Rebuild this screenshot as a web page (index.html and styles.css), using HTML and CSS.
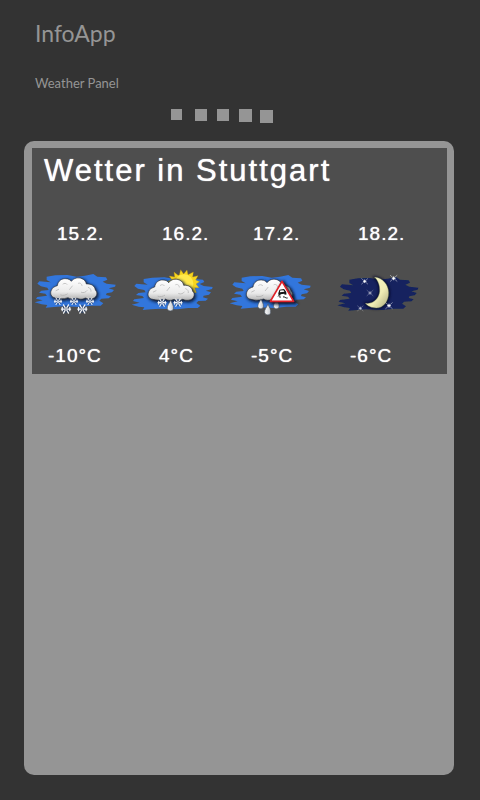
FILE: index.html
```
<!DOCTYPE html>
<html lang="de">
<head>
<meta charset="utf-8">
<meta name="viewport" content="width=device-width, initial-scale=1">
<title>InfoApp</title>
<link rel="stylesheet" href="styles.css">
</head>
<body>
<svg class="defs" aria-hidden="true">
  <defs>
    <filter id="soft" x="-10%" y="-10%" width="120%" height="120%"><feGaussianBlur stdDeviation="1.8"/></filter>
    <filter id="shade" x="-20%" y="-20%" width="140%" height="140%"><feGaussianBlur stdDeviation="4"/></filter>
    <linearGradient id="cloudFill" x1="0" y1="0" x2="0" y2="1">
      <stop offset="0" stop-color="#ffffff"/><stop offset=".65" stop-color="#ebebeb"/><stop offset="1" stop-color="#b4b4b4"/>
    </linearGradient>
    <linearGradient id="dropFill" x1="0" y1="0" x2="1" y2="0">
      <stop offset="0" stop-color="#ffffff"/><stop offset="1" stop-color="#c4c8cd"/>
    </linearGradient>
    <linearGradient id="moonFill" x1="0" y1="0" x2="1" y2="1">
      <stop offset="0" stop-color="#fbf9c8"/><stop offset=".6" stop-color="#eeecb4"/><stop offset="1" stop-color="#a9a87c"/>
    </linearGradient>
    <path id="splash" d="M50 44 L76 40 L112 39 L140 44 L165 41 L190 36 L202 44 L228 46 L232 53 L218 59 L230 65 L257 68 L255 74 L236 79 L252 84 L246 91 L230 94 L228 99 L243 103 L236 109 L214 110 L208 116 L220 124 L212 131 L184 131 L150 135 L100 133 L72 135 L47 137 L52 129 L35 127 L14 121 L38 115 L18 110 L22 105 L51 101 L46 95 L27 92 L34 86 L56 84 L52 77 L33 73 L22 65 L28 58 L62 61 L50 54 Z"/>
    <path id="cloudShape" d="M76 108 C64 106 59 95 64 85 C66 76 76 73 82 71 C84 56 96 49 107 50 C116 50 121 54 124 58 C131 48 145 45 156 50 C164 53 168 60 169 66 C184 64 195 73 196 84 C204 91 201 105 190 109 C179 113 171 110 166 108 C154 114 146 111 140 108 C130 113 120 111 114 107 C101 112 86 111 76 108 Z"/>
    <g id="cloud">
      <use href="#cloudShape" x="3" y="4" fill="#101d38" stroke="#101d38" stroke-width="5" filter="url(#shade)"/>
      <use href="#cloudShape" fill="url(#cloudFill)" stroke="#30343b" stroke-width="2"/>
      <g fill="none" stroke="#a4a4a4" stroke-width="3" stroke-linecap="round" opacity=".6" filter="url(#soft)">
        <path d="M99 66 C102 63 109 63 111 67M145 64 C150 61 156 66 156 71M78 86 L86 82M127 72 L119 82M175 76 C181 78 184 83 183 88M154 91 C161 94 168 90 171 86M92 99 C99 102 108 99 112 96"/>
      </g>
    </g>
    <g id="flake" fill="none" stroke-linecap="round">
      <circle r="10" fill="#26426f" stroke="none" opacity=".55"/>
      <g stroke="#f4f6f9" stroke-width="3"><path d="M-11 0H-3M3 0H11M-6 -10L-2 -3M2 3L6 10M6 -10L2 -3M-2 3L-6 10M-9 -4V4M9 -4V4"/></g>
      <circle r="2" fill="#f4f6f9" stroke="none"/>
    </g>
    <path id="drop" d="M1 -17 C4 -8 11 0 9 9 C7 18 -6 18 -9 9 C-11 1 -3 -7 1 -17 Z" fill="url(#dropFill)" stroke="#47505e" stroke-width="2"/>
    <g id="star" stroke="#ffffff" stroke-linecap="round">
      <path d="M-9 -8L9 8M9 -8L-9 8" stroke-width="1.6" opacity=".75"/>
      <path d="M-4 0H4M0 -4V4" stroke-width="2.6"/>
      <circle r="2.2" fill="#ffffff" stroke="none"/>
    </g>
  </defs>
</svg>

<header class="app-header">
  <h1 class="app-title">InfoApp</h1>
  <p class="app-subtitle">Weather Panel</p>
</header>

<div class="pager" aria-hidden="true">
  <span class="dot dot-small"></span>
  <span class="dot dot-medium"></span>
  <span class="dot dot-medium"></span>
  <span class="dot dot-large"></span>
  <span class="dot dot-large dot-last"></span>
</div>

<main class="panel">
  <section class="weather">
    <h2 class="weather-title">Wetter in Stuttgart</h2>
    <table class="forecast">
      <thead>
        <tr class="dates"><th scope="col">15.2.</th><th scope="col">16.2.</th><th scope="col">17.2.</th><th scope="col">18.2.</th></tr>
      </thead>
      <tbody>
        <tr class="icons">
          <td>
            <svg class="icon" viewBox="6 0 279 180" role="img" aria-label="Schnee">
              <use href="#splash" fill="#3276dc" filter="url(#soft)"/>
              <use href="#cloud"/>
              <use href="#flake" transform="translate(84 118)"/>
              <use href="#flake" transform="translate(132 118)"/>
              <use href="#flake" transform="translate(180 118)"/>
              <use href="#flake" transform="translate(108 141) scale(1.25)"/>
              <use href="#flake" transform="translate(157 141) scale(1.25)"/>
            </svg>
          </td>
          <td>
            <svg class="icon" viewBox="6 0 279 180" role="img" aria-label="Schneeregen mit Sonne">
              <use href="#splash" x="6" y="7" fill="#3276dc" filter="url(#soft)"/>
              <path d="M163 39 L167 23 L176 36 L186 24 L189 38 L205 30 L203 45 L219 41 L212 54 L224 59 L213 66 L222 77 L209 77 L214 92 L190 92 L140 66 L128 58 L141 54 L133 42 L149 45 L147 30 L159 40 Z" fill="#f6d51f" stroke="#b58c13" stroke-width="1"/>
              <circle cx="177" cy="65" r="28" fill="#ffe94b"/>
              <use href="#cloud" x="7" y="4"/>
              <use href="#flake" transform="translate(111 122) scale(1.1)"/>
              <use href="#flake" transform="translate(159 122) scale(1.1)"/>
              <use href="#drop" transform="translate(136 131)"/>
            </svg>
          </td>
          <td>
            <svg class="icon" viewBox="6 0 279 180" role="img" aria-label="Regen, Glättegefahr">
              <use href="#splash" y="3" fill="#3276dc" filter="url(#soft)"/>
              <use href="#cloud" x="2" y="4"/>
              <use href="#drop" transform="translate(107 126) scale(.9)"/>
              <use href="#drop" transform="translate(154 126) scale(.9)"/>
              <use href="#drop" transform="translate(128 143)"/>
              <path d="M176 61 L213 123 H142 Z" fill="#0b1223" stroke="#0b1223" stroke-width="7" filter="url(#shade)"/>
              <path d="M171 58 L206 118 H136 Z" fill="#ffffff" stroke="#e02028" stroke-width="5" stroke-linejoin="round"/>
              <g transform="rotate(-8 172 94)">
                <path d="M160 92 L165 82 H179 L184 91 V99 H178 V96 H166 V99 H160 Z" fill="#161616"/>
                <path d="M167 85 H177 L179 90 H165 Z" fill="#ffffff"/>
              </g>
              <path d="M159 103 C162 98 168 105 164 108 M174 105 C179 102 181 110 188 108" fill="none" stroke="#161616" stroke-width="3"/>
            </svg>
          </td>
          <td>
            <svg class="icon" viewBox="6 0 279 180" role="img" aria-label="Klare Nacht">
              <use href="#splash" x="8" y="9" fill="#12245f" filter="url(#soft)"/>
              <path d="M133 46 C157 47 176 68 177 92 C177 119 161 138 139 138 C124 138 112 132 106 124 C130 128 147 110 149 88 C150 70 144 55 133 46 Z" fill="#070d24" stroke="#070d24" stroke-width="5" filter="url(#shade)"/>
              <path d="M133 45 C157 46 176 68 176 92 C176 118 160 138 139 138 C124 138 112 132 106 124 C130 127 147 110 149 88 C150 70 144 55 133 45 Z" fill="url(#moonFill)" stroke="#68684f" stroke-width="1"/>
              <use href="#star" transform="translate(104 58)"/>
              <use href="#star" transform="translate(191 49) scale(1.1)"/>
              <use href="#star" transform="translate(120 93)" opacity=".6"/>
              <use href="#star" transform="translate(177 131) scale(1.1)"/>
              <use href="#star" transform="translate(91 139) scale(.9)" opacity=".75"/>
            </svg>
          </td>
        </tr>
        <tr class="temps"><td>-10°C</td><td>4°C</td><td>-5°C</td><td>-6°C</td></tr>
      </tbody>
    </table>
  </section>
</main>
</body>
</html>
```
FILE: styles.css
```
* {
  box-sizing: border-box;
}

body {
  display: flex;
  flex-direction: column;
  min-height: 100vh;
  margin: 0;
  padding: 19px 26px 25px 24px;
  background: #333333;
  color: #959595;
  font-family: Lato, "Open Sans", sans-serif;
}

.defs {
  position: absolute;
  width: 0;
  height: 0;
}

.app-header {
  padding-left: 11px;
}

.app-title {
  margin: 0 0 28px;
  font-size: 23px;
  font-weight: 400;
  line-height: 28px;
}

.app-subtitle {
  margin: 0 0 18px;
  font-size: 13px;
  line-height: 16px;
}

.pager {
  display: flex;
  justify-content: center;
  align-items: flex-start;
  gap: 10px;
  height: 14px;
  margin-bottom: 18px;
  padding-right: 34px;
}

.dot {
  background: #959595;
}

.dot-small {
  width: 11px;
  height: 11px;
  margin-right: 3px;
}

.dot-medium {
  width: 12px;
  height: 12px;
}

.dot-large {
  width: 13px;
  height: 13px;
}

.dot-last {
  align-self: flex-end;
  margin-left: -2px;
}

.panel {
  flex: 1;
  padding: 7px 7px 7px 8px;
  border-radius: 10px;
  background: #959595;
}

.weather {
  padding-bottom: 6px;
  background: #4e4e4e;
  color: #ffffff;
  font-family: "Liberation Sans", Arial, sans-serif;
  text-shadow: 0 0 1px #ffffff;
}

.weather-title {
  margin: 0 0 28px;
  padding-left: 12px;
  font-size: 31px;
  font-weight: 400;
  line-height: 46px;
  letter-spacing: 2px;
}

.forecast,
.forecast thead,
.forecast tbody {
  display: block;
}

.forecast tr {
  display: grid;
}

.forecast th,
.forecast td {
  padding: 0;
  font-size: 19px;
  font-weight: 400;
  line-height: 24px;
  letter-spacing: 1px;
  text-align: left;
}

.forecast .dates {
  grid-template-columns: 105fr 91fr 105fr 89fr;
  margin-bottom: 16px;
  padding-left: 25px;
}

.forecast .icons {
  grid-template-columns: 95fr 100fr 105fr 115fr;
  margin-bottom: 22px;
}

.forecast .temps {
  grid-template-columns: 111fr 92fr 99fr 97fr;
  padding-left: 16px;
}

.icon {
  display: block;
  width: 93px;
  height: 60px;
}
```
